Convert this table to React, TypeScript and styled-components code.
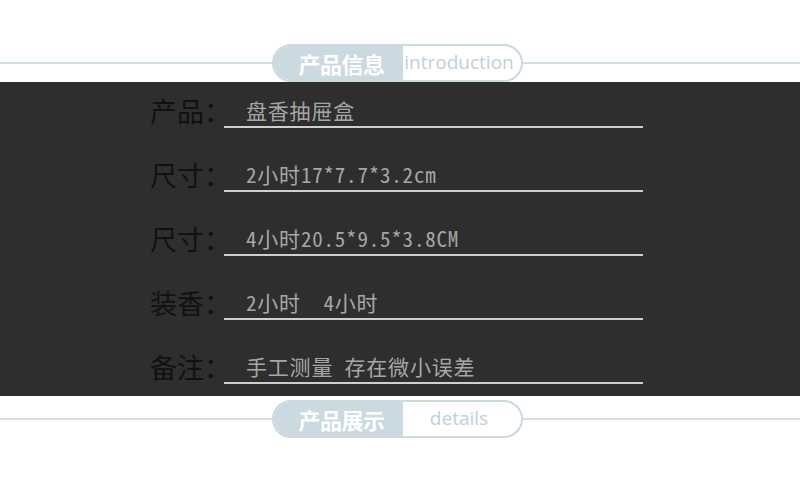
import React from "react";
import styled, { createGlobalStyle } from "styled-components";

const Global = createGlobalStyle`
  html, body { margin: 0; padding: 0; background: #ffffff; }
  body { font-family: "Noto Sans CJK SC", sans-serif; }
`;

const Page = styled.div`
  width: 800px;
  display: flex;
  flex-direction: column;
`;

const TitleBar = styled.div<{ $top: number }>`
  margin-top: ${(p) => p.$top}px;
  height: 39px;
  display: flex;
  align-items: center;
`;

const Rule = styled.div<{ $w?: number }>`
  ${(p) => (p.$w ? `width: ${p.$w}px;` : "flex: 1;")}
  height: 2px;
  background: #d3dfe6;
`;

const Pill = styled.div`
  width: 251px;
  height: 38px;
  box-sizing: border-box;
  border: 2px solid #cbd9e1;
  border-radius: 20px;
  overflow: hidden;
  display: flex;
  background: #ffffff;
`;

const PillLeft = styled.div`
  width: 129px;
  background: #cbd9e1;
  color: #ffffff;
  font-family: "Noto Sans CJK SC", sans-serif;
  font-weight: 700;
  font-size: 22px;
  display: flex;
  align-items: center;
  justify-content: center;
  padding-left: 6px;
  box-sizing: border-box;
  letter-spacing: -0.5px;
`;

const PillRight = styled.div`
  flex: 1;
  color: #bfd0da;
  font-family: "Open Sans", sans-serif;
  font-size: 19px;
  display: flex;
  align-items: center;
  justify-content: center;
  padding-bottom: 1px;
  padding-right: 6px;
`;

const Panel = styled.div`
  height: 314px;
  background: #2e2e2e;
  box-sizing: border-box;
  padding: 13px 0 0 150px;
  display: flex;
  flex-direction: column;
  gap: 31px;
`;

const Row = styled.div`
  display: flex;
  align-items: flex-end;
`;

const Label = styled.div`
  width: 74px;
  font-family: "Noto Sans CJK SC", sans-serif;
  font-size: 27px;
  line-height: 24px;
  color: #111111;
  padding-bottom: 5px;
  white-space: nowrap;
`;

const Field = styled.div`
  width: 419px;
  box-sizing: border-box;
  padding-left: 22px;
  border-bottom: 2px solid #cfcfcf;
  font-family: "Noto Sans Mono CJK SC", "Noto Sans CJK SC", sans-serif;
  font-size: 21px;
  line-height: 30px;
  padding-bottom: 1px;
  color: #a6a6a6;
  white-space: pre;
  letter-spacing: 0.8px;
`;

const rows: [string, string][] = [
  ["产品：", "盘香抽屉盒"],
  ["尺寸：", "2小时17*7.7*3.2cm"],
  ["尺寸：", "4小时20.5*9.5*3.8CM"],
  ["装香：", "2小时  4小时"],
  ["备注：", "手工测量 存在微小误差"],
];

function SectionTitle({ cn, en, top }: { cn: string; en: string; top: number }) {
  return (
    <TitleBar $top={top}>
      <Rule $w={272} />
      <Pill>
        <PillLeft>{cn}</PillLeft>
        <PillRight>{en}</PillRight>
      </Pill>
      <Rule />
    </TitleBar>
  );
}

export default function App() {
  return (
    <Page>
      <Global />
      <SectionTitle cn="产品信息" en="introduction" top={43} />
      <Panel>
        {rows.map(([l, v], i) => (
          <Row key={i}>
            <Label>{l}</Label>
            <Field>{v}</Field>
          </Row>
        ))}
      </Panel>
      <SectionTitle cn="产品展示" en="details" top={3} />
    </Page>
  );
}
